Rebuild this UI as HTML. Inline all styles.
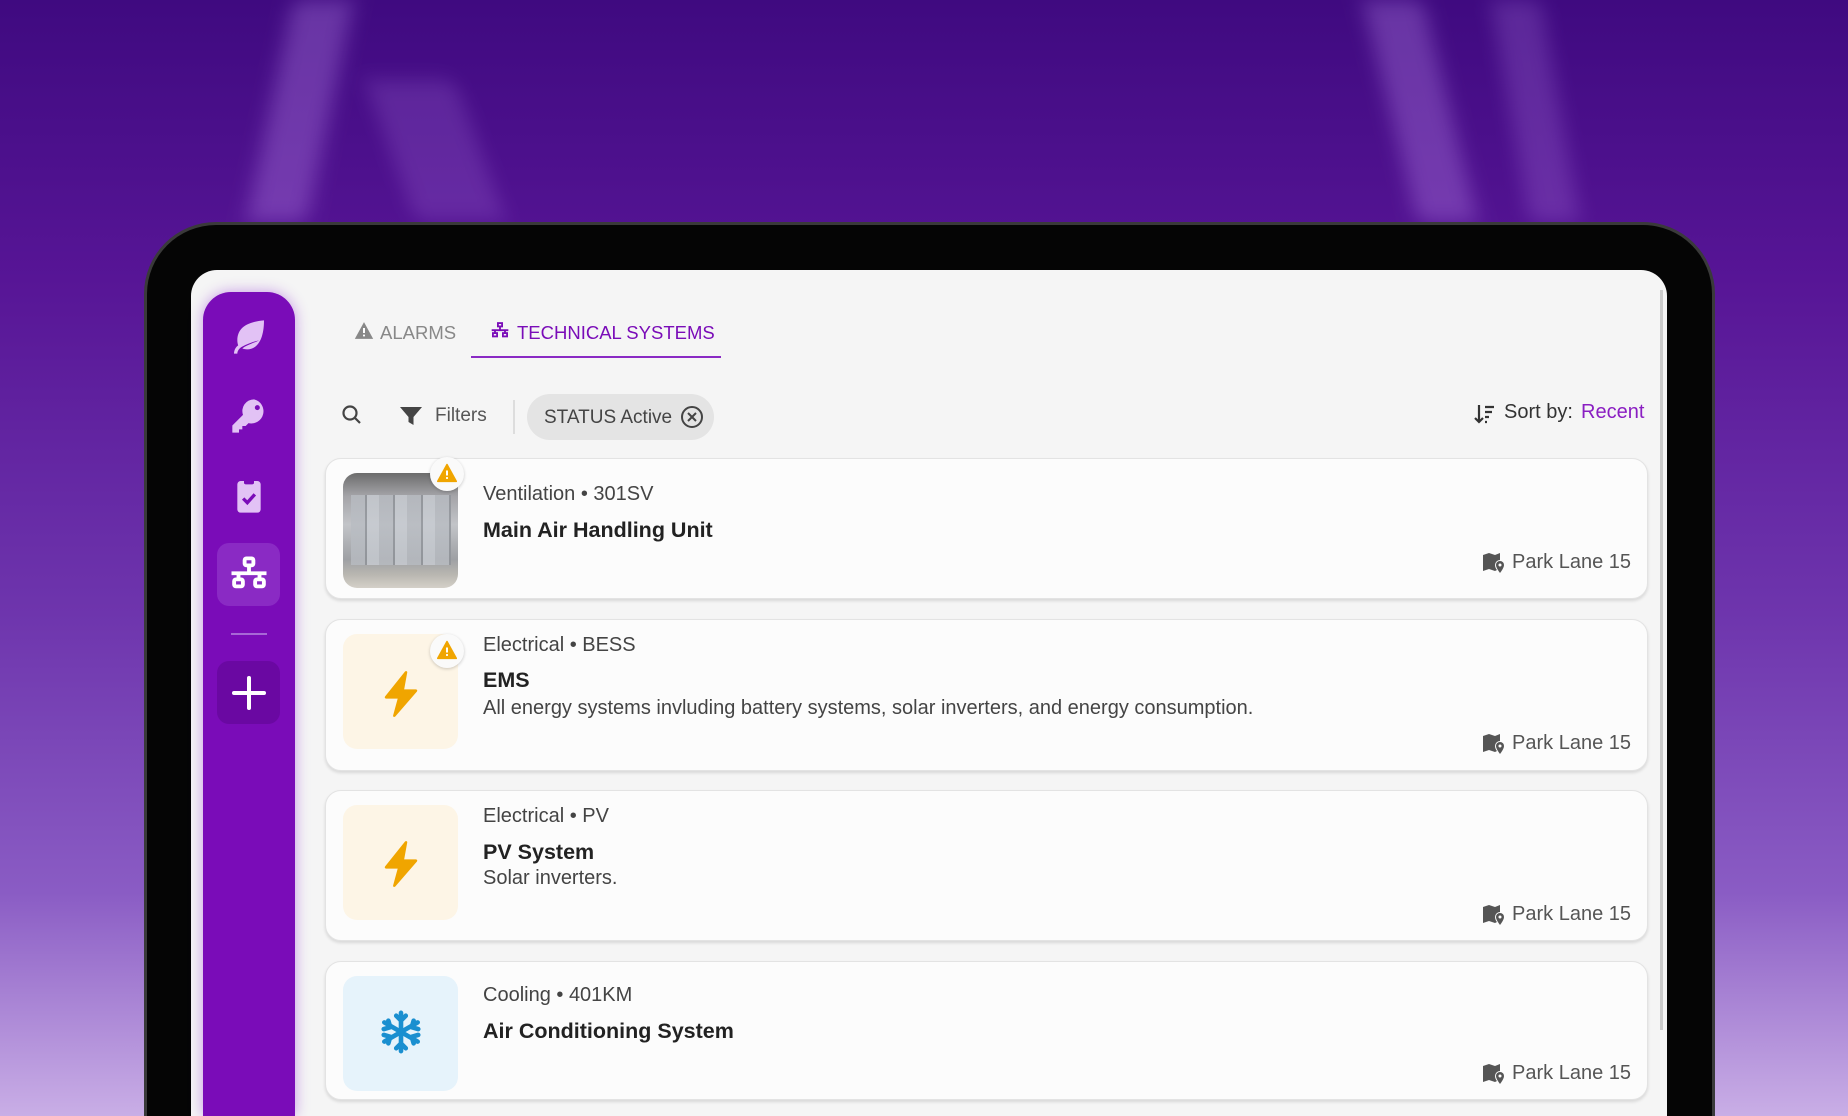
<!DOCTYPE html>
<html style="width:1848px;height:1116px;overflow:hidden"><head><meta charset="utf-8"><style>
*{margin:0;padding:0;box-sizing:border-box}
body{width:1848px;height:1116px;overflow:hidden;position:relative;font-family:"Liberation Sans",sans-serif;
background:linear-gradient(180deg,#3f0a80 0%,#571596 25%,#6e35ad 55%,#8a5cc4 80%,#c9aee6 100%);}
.beam{position:absolute;background:rgba(210,160,255,.28);filter:blur(10px)}
.a{position:absolute}
.dev{left:144px;top:222px;width:1571px;height:894px;background:#050505;border-radius:72px 72px 0 0;border:3px solid #3a3a3a;border-bottom:0}
.scr{left:191px;top:270px;width:1476px;height:846px;background:#f5f5f5;border-radius:26px 26px 0 0}
.side{left:203px;top:292px;width:92px;height:824px;background:#7a0cb8;border-radius:28px 28px 0 0;box-shadow:0 0 14px rgba(140,40,210,.45)}
.sq{position:absolute;left:217px;width:63px;height:63px;border-radius:12px}
.card{position:absolute;left:325px;width:1323px;background:#fcfcfc;border-radius:16px;border:1px solid #e3e3e3;box-shadow:0 2px 3px rgba(0,0,0,.12)}
.th{position:absolute;left:17px;top:14px;width:115px;height:115px;border-radius:14px}
.cat{position:absolute;left:157px;font-size:20px;color:#444}
.tt{position:absolute;left:157px;font-size:21.5px;font-weight:bold;color:#222}
.ds{position:absolute;left:157px;font-size:20px;color:#444}
.loc{position:absolute;right:16px;font-size:20px;color:#555;display:flex;align-items:center;gap:6px}
.warn{position:absolute;left:104px;top:-2px;width:34px;height:34px;border-radius:50%;background:#fafafa;box-shadow:0 1px 3px rgba(0,0,0,.2)}
</style></head><body>
<div class="beam" style="left:270px;top:0;width:60px;height:222px;transform:skewX(-12deg)"></div>
<div class="beam" style="left:390px;top:80px;width:90px;height:140px;transform:skewX(20deg);opacity:.6"></div>
<div class="beam" style="left:1390px;top:0;width:60px;height:222px;transform:skewX(14deg)"></div>
<div class="beam" style="left:1510px;top:0;width:50px;height:222px;transform:skewX(10deg);opacity:.7"></div>
<div class="a dev"></div>
<div class="a scr"></div>
<div class="a" style="left:1660px;top:290px;width:3px;height:740px;background:#ccc"></div>
<div class="a side"></div>
<svg class="a" style="left:229px;top:317px" width="40" height="40" viewBox="0 0 24 24"><path d="M21 2C10 3 5 7 5 14c0 1 .2 2 .5 3C4 18 3 20 3 22h2c0-1.5 1-3 2.5-4C13 15 18 14 18 14 14 16 10 17 8 19c7 2 13-3 13-17z" fill="#e2c2f5"/></svg>
<svg class="a" style="left:229px;top:396px" width="40" height="40" viewBox="0 0 24 24"><path d="M15 2a7 7 0 0 0-6.6 9.3L2 17.7V22h4v-2h2v-2h2l1.7-1.7A7 7 0 1 0 15 2zm2 6.5a1.5 1.5 0 1 1 0-3 1.5 1.5 0 0 1 0 3z" fill="#e2c2f5"/></svg>
<svg class="a" style="left:229px;top:475px" width="40" height="42" viewBox="0 0 24 24"><rect x="5" y="3" width="14" height="19" rx="2" fill="#e2c2f5"/><rect x="9" y="2" width="6" height="3" rx="1" fill="#7a0cb8"/><path d="M8.5 13.5l2.5 2.5 4.5-5" stroke="#7a0cb8" stroke-width="2" fill="none"/></svg>
<div class="sq" style="top:543px;background:#8a2ac4"></div>
<svg class="a" style="left:228px;top:554px" width="42" height="42" viewBox="0 0 24 24" fill="none" stroke="#fff" stroke-width="2.2"><rect x="9.5" y="2.5" width="5" height="4" rx="1"/><path d="M12 6.5v4M2 11h20M6 11v3M18 11v3"/><rect x="3.5" y="14.5" width="5" height="4" rx="1"/><rect x="15.5" y="14.5" width="5" height="4" rx="1"/></svg>
<div class="a" style="left:231px;top:633px;width:36px;height:2px;background:#a768d6"></div>
<div class="sq" style="top:661px;background:#6a08a2"></div>
<div class="a" style="left:232px;top:691px;width:34px;height:4px;background:#fff;border-radius:2px"></div>
<div class="a" style="left:247px;top:676px;width:4px;height:34px;background:#fff;border-radius:2px"></div>
<svg class="a" style="left:354px;top:321px" width="20" height="19" viewBox="0 0 24 22"><path d="M12 1L23 21H1z" fill="#888"/><path d="M12 8v6M12 16v2" stroke="#fff" stroke-width="2.4"/></svg>
<div class="a" style="left:380px;top:322px;font-size:18.5px;color:#888">ALARMS</div>
<svg class="a" style="left:490px;top:321px" width="20" height="20" viewBox="0 0 24 24" fill="none" stroke="#7a0cb8" stroke-width="2.2"><rect x="9.5" y="2.5" width="5" height="4"/><path d="M12 6.5v4M2 11h20M6 11v3M18 11v3"/><rect x="3.5" y="14.5" width="5" height="4"/><rect x="15.5" y="14.5" width="5" height="4"/></svg>
<div class="a" style="left:517px;top:322px;font-size:18.5px;color:#7a0cb8">TECHNICAL SYSTEMS</div>
<div class="a" style="left:471px;top:356px;width:250px;height:2px;background:#8a2ac4"></div>
<svg class="a" style="left:340px;top:403px" width="24" height="24" viewBox="0 0 24 24" fill="none" stroke="#444" stroke-width="2.2"><circle cx="10" cy="10" r="6.5"/><path d="M15 15l5 5"/></svg>
<svg class="a" style="left:399px;top:405px" width="24" height="22" viewBox="0 0 24 22"><path d="M1 2h22l-8.5 10v8l-5-3v-5z" fill="#444"/></svg>
<div class="a" style="left:435px;top:405px;font-size:19px;color:#555">Filters</div>
<div class="a" style="left:513px;top:400px;width:2px;height:34px;background:#ddd"></div>
<div class="a" style="left:527px;top:394px;width:187px;height:46px;border-radius:23px;background:#e4e4e4"></div>
<div class="a" style="left:544px;top:407px;font-size:19px;color:#444">STATUS Active</div>
<svg class="a" style="left:680px;top:405px" width="24" height="24" viewBox="0 0 24 24" fill="none" stroke="#444" stroke-width="2"><circle cx="12" cy="12" r="10"/><path d="M8 8l8 8M16 8l-8 8"/></svg>
<svg class="a" style="left:1473px;top:402px" width="24" height="24" viewBox="0 0 24 24" fill="none" stroke="#333" stroke-width="2.2"><path d="M6 3v17M2 16l4 4 4-4M12 5h9M12 10h7M12 15h4M12 20h2"/></svg>
<div class="a" style="left:1504px;top:401px;font-size:20px;color:#333">Sort by:</div>
<div class="a" style="left:1581px;top:401px;font-size:20px;color:#8a1ec2">Recent</div>

<div class="card" style="top:458px;height:141px">
 <div class="th" style="background:linear-gradient(180deg,#6c6c6c 0%,#a4a4a8 20%,#c2c4c8 45%,#9ea0a4 75%,#b8b6b0 88%,#d4d0c8 100%)">
  <div style="position:absolute;left:8px;top:22px;width:100px;height:70px;background:repeating-linear-gradient(90deg,#b8bcc2 0 14px,#8e9298 14px 16px,#c8ccd2 16px 28px);opacity:.8"></div>
 </div>
 <div class="warn"><svg style="position:absolute;left:7px;top:6px" width="20" height="20" viewBox="0 0 24 22"><path d="M12 1L23 21H1z" fill="#f0a500" stroke="#f0a500" stroke-linejoin="round" stroke-width="2"/><path d="M12 8v6M12 16v2" stroke="#fff" stroke-width="2.4"/></svg></div>
 <div class="cat" style="top:24px">Ventilation • 301SV</div>
 <div class="tt" style="top:59px">Main Air Handling Unit</div>
 <div class="loc" style="top:92px"><svg width="24" height="22" viewBox="0 0 24 22"><path d="M1 3l6-2 6 2 5-2v7a5 5 0 0 0-5 5c0 2 1 4 2 5l-2 1-6-2-6 2z" fill="#555"/><path d="M18 9a4 4 0 0 0-4 4c0 3 4 8 4 8s4-5 4-8a4 4 0 0 0-4-4z" fill="#555"/><circle cx="18" cy="13" r="1.5" fill="#fff"/></svg>Park Lane 15</div>
</div>

<div class="card" style="top:619px;height:152px">
 <div class="th" style="background:#fdf5e6"></div>
 <svg style="position:absolute;left:55px;top:50px" width="40" height="48" viewBox="0 0 24 28"><path d="M15 1L3 16h8l-3 11 13-15h-8z" fill="#f0a500" stroke="#f0a500" stroke-linejoin="round" stroke-width="1.5"/></svg>
 <div class="warn" style="top:14px"><svg style="position:absolute;left:7px;top:6px" width="20" height="20" viewBox="0 0 24 22"><path d="M12 1L23 21H1z" fill="#f0a500" stroke="#f0a500" stroke-linejoin="round" stroke-width="2"/><path d="M12 8v6M12 16v2" stroke="#fff" stroke-width="2.4"/></svg></div>
 <div class="cat" style="top:14px">Electrical • BESS</div>
 <div class="tt" style="top:48px">EMS</div>
 <div class="ds" style="top:77px">All energy systems invluding battery systems, solar inverters, and energy consumption.</div>
 <div class="loc" style="top:112px"><svg width="24" height="22" viewBox="0 0 24 22"><path d="M1 3l6-2 6 2 5-2v7a5 5 0 0 0-5 5c0 2 1 4 2 5l-2 1-6-2-6 2z" fill="#555"/><path d="M18 9a4 4 0 0 0-4 4c0 3 4 8 4 8s4-5 4-8a4 4 0 0 0-4-4z" fill="#555"/><circle cx="18" cy="13" r="1.5" fill="#fff"/></svg>Park Lane 15</div>
</div>

<div class="card" style="top:790px;height:151px">
 <div class="th" style="background:#fdf5e6"></div>
 <svg style="position:absolute;left:55px;top:49px" width="40" height="48" viewBox="0 0 24 28"><path d="M15 1L3 16h8l-3 11 13-15h-8z" fill="#f0a500" stroke="#f0a500" stroke-linejoin="round" stroke-width="1.5"/></svg>
 <div class="cat" style="top:14px">Electrical • PV</div>
 <div class="tt" style="top:49px">PV System</div>
 <div class="ds" style="top:76px">Solar inverters.</div>
 <div class="loc" style="top:112px"><svg width="24" height="22" viewBox="0 0 24 22"><path d="M1 3l6-2 6 2 5-2v7a5 5 0 0 0-5 5c0 2 1 4 2 5l-2 1-6-2-6 2z" fill="#555"/><path d="M18 9a4 4 0 0 0-4 4c0 3 4 8 4 8s4-5 4-8a4 4 0 0 0-4-4z" fill="#555"/><circle cx="18" cy="13" r="1.5" fill="#fff"/></svg>Park Lane 15</div>
</div>

<div class="card" style="top:961px;height:139px">
 <div class="th" style="background:#e6f3fb"></div>
 <svg style="position:absolute;left:52px;top:45px" width="46" height="50" viewBox="0 0 24 24" fill="none" stroke="#1a8fd0" stroke-width="2.4" stroke-linecap="round"><path d="M12 2v20M3.3 7l17.4 10M3.3 17L20.7 7M9.5 3.5L12 6l2.5-2.5M9.5 20.5L12 18l2.5 2.5M3 10.5l3.4-1-1-3.4M21 13.5l-3.4 1 1 3.4M3 13.5l3.4 1-1 3.4M21 10.5l-3.4-1 1-3.4"/></svg>
 <div class="cat" style="top:22px">Cooling • 401KM</div>
 <div class="tt" style="top:57px">Air Conditioning System</div>
 <div class="loc" style="top:100px"><svg width="24" height="22" viewBox="0 0 24 22"><path d="M1 3l6-2 6 2 5-2v7a5 5 0 0 0-5 5c0 2 1 4 2 5l-2 1-6-2-6 2z" fill="#555"/><path d="M18 9a4 4 0 0 0-4 4c0 3 4 8 4 8s4-5 4-8a4 4 0 0 0-4-4z" fill="#555"/><circle cx="18" cy="13" r="1.5" fill="#fff"/></svg>Park Lane 15</div>
</div>
</body></html>
